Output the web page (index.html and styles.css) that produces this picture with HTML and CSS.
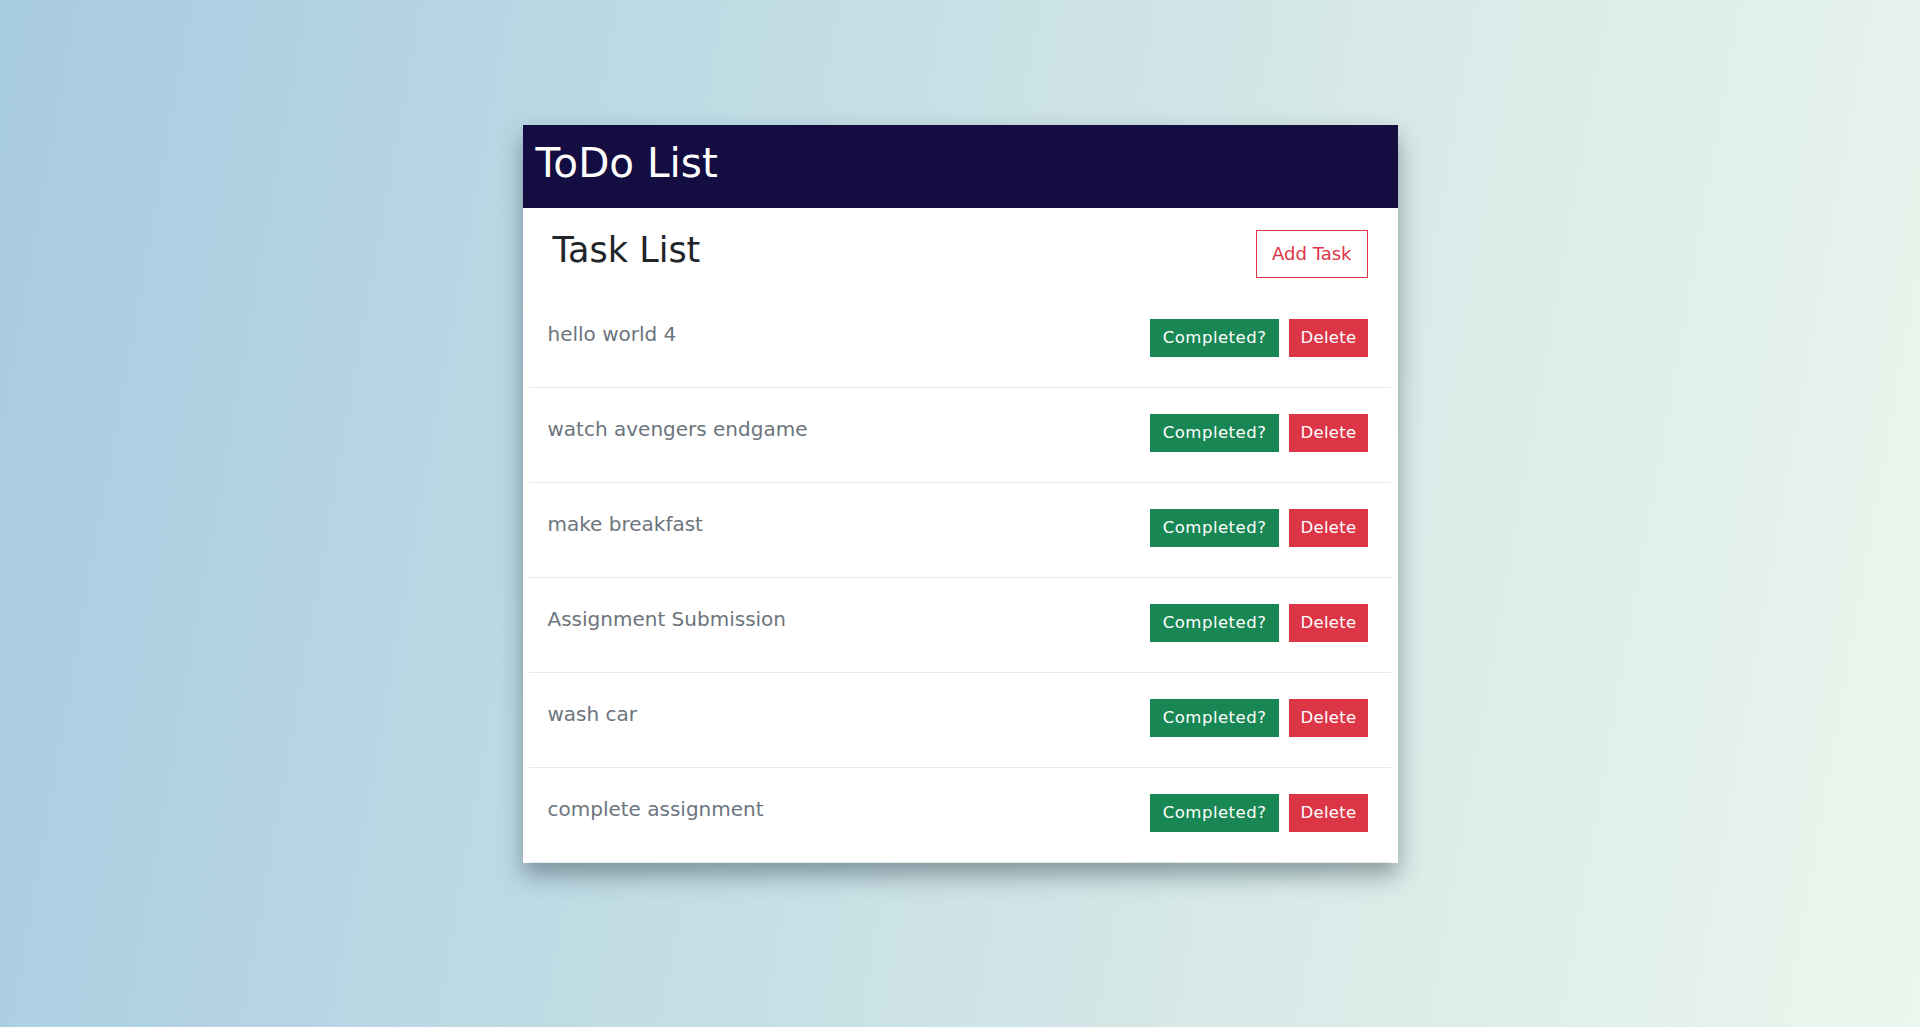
FILE: index.html
```html
<!DOCTYPE html>
<html lang="en">
<head>
<meta charset="utf-8">
<title>ToDo List</title>
<link rel="stylesheet" href="styles.css">
</head>
<body>
<main class="card">
  <header class="card-header">
    <h1 class="app-title">ToDo List</h1>
  </header>
  <section class="task-section">
    <div class="task-head">
      <h2 class="task-title">Task List</h2>
      <button class="btn btn-outline">Add Task</button>
    </div>
    <ul class="task-list">
      <li class="task-row"><p class="task-text">hello world 4</p><div class="task-actions"><button class="btn btn-green">Completed?</button><button class="btn btn-red">Delete</button></div></li>
      <li class="task-row"><p class="task-text">watch avengers endgame</p><div class="task-actions"><button class="btn btn-green">Completed?</button><button class="btn btn-red">Delete</button></div></li>
      <li class="task-row"><p class="task-text">make breakfast</p><div class="task-actions"><button class="btn btn-green">Completed?</button><button class="btn btn-red">Delete</button></div></li>
      <li class="task-row"><p class="task-text">Assignment Submission</p><div class="task-actions"><button class="btn btn-green">Completed?</button><button class="btn btn-red">Delete</button></div></li>
      <li class="task-row"><p class="task-text">wash car</p><div class="task-actions"><button class="btn btn-green">Completed?</button><button class="btn btn-red">Delete</button></div></li>
      <li class="task-row"><p class="task-text">complete assignment</p><div class="task-actions"><button class="btn btn-green">Completed?</button><button class="btn btn-red">Delete</button></div></li>
    </ul>
  </section>
</main>
</body>
</html>
```

FILE: styles.css
```css
* { box-sizing: border-box; }
html, body { margin: 0; padding: 0; }
body {
  min-height: 100vh;
  background: linear-gradient(100deg, #a7cbe1 0%, #bfdbe4 35%, #d6e8e7 65%, #ebf6ed 100%);
  font-family: "DejaVu Sans", "Noto Sans", sans-serif;
  padding-top: 125px;
}
.card {
  width: 875px;
  margin: 0 auto;
  background: #fff;
  box-shadow: 0 12px 22px rgba(40, 60, 70, 0.45);
}
.card-header {
  background: #130d42;
  height: 83px;
  padding: 14px 10px 0 13px;
}
.app-title {
  margin: 0;
  color: #fff;
  font-weight: 400;
  font-size: 40.5px;
  line-height: 48px;
}
.task-section { padding: 0 7px 0 6px; }
.task-head {
  display: flex;
  justify-content: space-between;
  align-items: flex-start;
  height: 85px;
  padding: 22px 23px 0 24px;
}
.task-title {
  margin: 0;
  font-weight: 400;
  font-size: 35px;
  line-height: 40px;
  color: #212529;
}
.btn {
  font-family: inherit;
  border: 1px solid transparent;
  border-radius: 0;
  cursor: pointer;
}
.btn-outline {
  background: #fff;
  border-color: #dc3545;
  color: #dc3545;
  font-size: 18px;
  line-height: 30px;
  padding: 8px 15px;
}
.task-list { list-style: none; margin: 0; padding: 0; }
.task-row {
  display: flex;
  justify-content: space-between;
  align-items: flex-start;
  height: 95px;
  padding: 26px 23px 0 19px;
  border-bottom: 1px solid #e7e9eb;
}
.task-text {
  margin: 0;
  font-size: 20px;
  line-height: 30px;
  color: #6c757d;
}
.task-actions { display: flex; gap: 10px; }
.btn-green, .btn-red {
  color: #fff;
  font-size: 16.5px;
  letter-spacing: 0.5px;
  line-height: 24px;
  padding: 6px 12px;
}
.btn-green { background: #198754; border-color: #198754; }
.btn-red { background: #dc3545; border-color: #dc3545; padding: 6px 10px; letter-spacing: 0.3px; }
```
